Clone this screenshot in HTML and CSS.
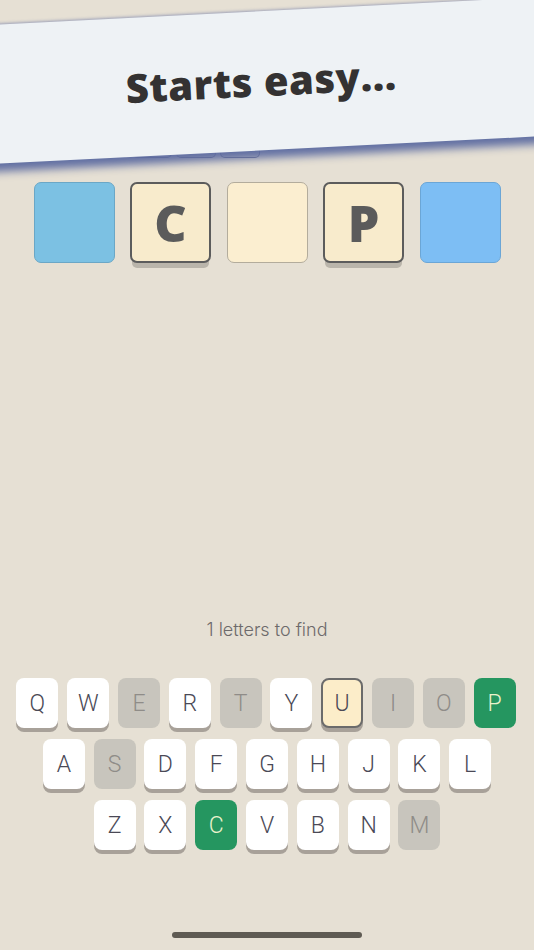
FILE: index.html
```html
<!DOCTYPE html>
<html lang="en">
<head>
<meta charset="utf-8">
<title>Starts easy</title>
<link rel="stylesheet" href="styles.css">
</head>
<body>
<div class="app">
  <div class="mini-row">
    <div class="mini"></div>
    <div class="mini"></div>
    <div class="mini"></div>
    <div class="mini"></div>
  </div>

  <div class="tiles">
    <div class="tile tile-blue"></div>
    <div class="tile tile-set">C</div>
    <div class="tile tile-empty"></div>
    <div class="tile tile-set">P</div>
    <div class="tile tile-sky"></div>
  </div>

  <div class="hint">1 letters to find</div>

  <div class="keyboard">
    <div class="krow">
      <div class="key">Q</div>
      <div class="key">W</div>
      <div class="key used">E</div>
      <div class="key">R</div>
      <div class="key used">T</div>
      <div class="key">Y</div>
      <div class="key sel">U</div>
      <div class="key used">I</div>
      <div class="key used">O</div>
      <div class="key good">P</div>
    </div>
    <div class="krow">
      <div class="key">A</div>
      <div class="key used">S</div>
      <div class="key">D</div>
      <div class="key">F</div>
      <div class="key">G</div>
      <div class="key">H</div>
      <div class="key">J</div>
      <div class="key">K</div>
      <div class="key">L</div>
    </div>
    <div class="krow">
      <div class="key">Z</div>
      <div class="key">X</div>
      <div class="key good">C</div>
      <div class="key">V</div>
      <div class="key">B</div>
      <div class="key">N</div>
      <div class="key used">M</div>
    </div>
  </div>

  <div class="home-indicator"></div>

  <div class="banner"><span class="banner-text">Starts easy...</span></div>
</div>
</body>
</html>
```

FILE: styles.css
```css
html, body {
  margin: 0;
  padding: 0;
}

body {
  background: #e6e0d4;
}

.app {
  position: relative;
  width: 534px;
  height: 950px;
  overflow: hidden;
  display: flex;
  flex-direction: column;
  background: #e6e0d4;
}

.mini-row {
  display: flex;
  gap: 4px;
  padding-top: 118px;
  padding-left: 88px;
}

.mini {
  width: 40px;
  height: 40px;
  box-sizing: border-box;
  border: 1px solid rgba(50, 55, 100, 0.6);
  border-radius: 5px;
  background: rgba(120, 128, 170, 0.2);
}

.tiles {
  display: flex;
  justify-content: center;
  gap: 15.5px;
  margin-top: 24px;
}

.tile {
  width: 81px;
  height: 81px;
  box-sizing: border-box;
  border-radius: 7px;
  display: flex;
  align-items: center;
  justify-content: center;
  font-family: "Open Sans", "DejaVu Sans", sans-serif;
  font-weight: 800;
  font-size: 50px;
  color: #5b5b5b;
  line-height: 1;
}

.tile-blue {
  background: #7cc1e3;
  border: 1px solid #6ba7c6;
}

.tile-sky {
  background: #7dbef4;
  border: 1px solid #6ba6d6;
}

.tile-empty {
  background: #fbeed0;
  border: 1px solid #b3ac9c;
}

.tile-set {
  background: #f8ebcc;
  border: 2px solid #5c5c5c;
  box-shadow: 0 7px 0 -2px #bab5ab;
}

.hint {
  margin-top: 357px;
  text-align: center;
  font-family: Inter, "Noto Sans", sans-serif;
  font-weight: 300;
  font-size: 18px;
  line-height: 20px;
  color: #6d6a6b;
}

.keyboard {
  margin-top: 38px;
  display: flex;
  flex-direction: column;
  gap: 11px;
}

.krow {
  display: flex;
  justify-content: center;
  gap: 8.8px;
}

.krow:first-child {
  padding-right: 2px;
}

.key {
  width: 42px;
  height: 50px;
  box-sizing: border-box;
  border-radius: 8px;
  background: #ffffff;
  box-shadow: 0 4px 0 #a8a199;
  display: flex;
  align-items: center;
  justify-content: center;
  font-family: Roboto, "Noto Sans", sans-serif;
  font-weight: 300;
  font-size: 23px;
  color: #4a4956;
}

.key.used {
  background: #c8c5bd;
  color: #8f8c88;
  box-shadow: none;
}

.key.good {
  background: #259660;
  color: #eaf2cc;
  box-shadow: none;
}

.key.sel {
  background: #fcedc9;
  border: 2px solid #6b6b6b;
  color: #4a4956;
}

.home-indicator {
  margin: 82px auto 0;
  width: 190px;
  height: 6px;
  border-radius: 3px;
  background: #5f5b53;
}

.banner {
  position: absolute;
  left: -20px;
  top: 10.5px;
  width: 574px;
  height: 139px;
  transform: rotate(-2.9deg);
  background: #eef2f5;
  box-shadow: 0 10px 9px -2px rgba(92, 106, 160, 0.95), 0 -1px 3px rgba(98, 112, 163, 0.55);
  display: flex;
  align-items: center;
  justify-content: center;
  padding-right: 12px;
  box-sizing: border-box;
  z-index: 5;
}

.banner-text {
  font-family: "Open Sans", "DejaVu Sans", sans-serif;
  font-weight: 800;
  font-size: 40px;
  letter-spacing: 0.5px;
  color: #343232;
}
```
